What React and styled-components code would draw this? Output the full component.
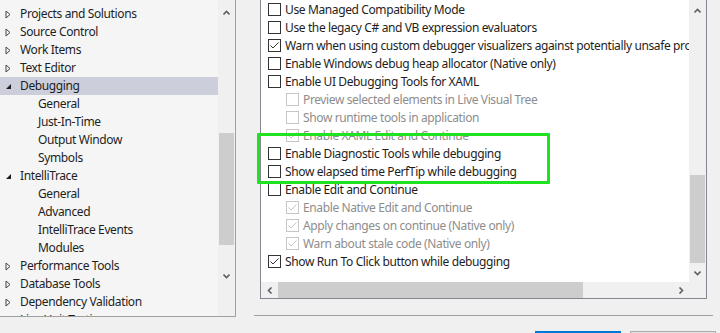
import React from 'react';
import styled, { createGlobalStyle } from 'styled-components';

const GlobalStyle = createGlobalStyle`
  html, body {
    margin: 0;
    padding: 0;
    background: #f0f0f0;
  }
  body {
    font-family: "Noto Sans", "Open Sans", sans-serif;
    font-size: 12px;
    letter-spacing: -0.38px;
    color: #1e1e1e;
  }
`;

const Frame = styled.div`
  width: 720px;
  height: 333px;
  overflow: hidden;
  display: flex;
  align-items: flex-start;
  background: #f0f0f0;
`;

/* left: options tree */

const TreePanel = styled.div`
  width: 235px;
  height: 316px;
  margin: -1px 0 0 -1px;
  border: 1px solid #a0a0a0;
  background: #f5f5f5;
  display: flex;
  overflow: hidden;
  flex-shrink: 0;
`;

const TreeList = styled.div`
  flex: 1;
  padding-top: 5px;
  overflow: hidden;
`;

const TreeRow = styled.div`
  height: 18px;
  display: flex;
  align-items: center;
  padding-left: ${p => (p.$depth ? 38 : 4)}px;
  background: ${p => (p.$selected ? '#cccedb' : 'transparent')};
  white-space: nowrap;
  line-height: 18px;
`;

const Expander = styled.span`
  width: 15px;
  height: 18px;
  display: flex;
  align-items: center;
  justify-content: flex-start;
  padding-left: 1px;
`;

const VScroll = styled.div`
  width: 17px;
  background: #f0f0f0;
  display: flex;
  flex-direction: column;
  align-items: center;
  flex-shrink: 0;
`;

const ArrowBox = styled.div`
  height: ${p => p.$h || 17}px;
  width: ${p => (p.$w ? `${p.$w}px` : '100%')};
  display: flex;
  align-items: center;
  justify-content: center;
  flex-shrink: 0;
`;

const Thumb = styled.div`
  width: 15px;
  background: #cdcdcd;
  margin-top: ${p => p.$top}px;
  height: ${p => p.$size}px;
  flex-shrink: 0;
`;

/* right: debugging options */

const RightColumn = styled.div`
  width: 459px;
  margin-left: 18px;
  display: flex;
  flex-direction: column;
`;

const PanelWrap = styled.div`
  position: relative;
  margin-left: 6px;
`;

const Panel = styled.div`
  width: 445px;
  height: 298px;
  margin-top: -1px;
  border: 1px solid #828790;
  display: grid;
  grid-template-columns: 428px 17px;
  grid-template-rows: 282px 16px;
  background: #f0f0f0;
`;

const Content = styled.div`
  background: #ffffff;
  overflow: hidden;
`;

const OptionRow = styled.div`
  height: 18px;
  display: flex;
  align-items: center;
  gap: 4px;
  padding-left: ${p => (p.$indent ? 25 : 7)}px;
  white-space: nowrap;
  color: ${p => (p.$disabled ? '#8d8d8d' : '#1e1e1e')};
`;

const Box = styled.span`
  width: 11px;
  height: 11px;
  border: 1px solid ${p => (p.$disabled ? '#c6c6c6' : '#333333')};
  background: #ffffff;
  flex-shrink: 0;
  display: flex;
  align-items: center;
  justify-content: center;
`;

const PanelVScroll = styled.div`
  display: flex;
  flex-direction: column;
  align-items: center;
  background: #f0f0f0;
`;

const HScroll = styled.div`
  display: flex;
  align-items: center;
  background: #f0f0f0;
`;

const HThumb = styled.div`
  height: 16px;
  width: ${p => p.$size}px;
  background: #cdcdcd;
  flex-shrink: 0;
`;

const Spacer = styled.div`
  flex: 1;
`;

const Corner = styled.div`
  background: #f0f0f0;
`;

const Highlight = styled.div`
  position: absolute;
  left: -3px;
  top: 133px;
  width: 287px;
  height: 45px;
  border: 3px solid #1ee31e;
  border-radius: 1px;
  pointer-events: none;
`;

const Separator = styled.div`
  height: 1px;
  background: #a0a0a0;
  margin-top: 16px;
`;

const ButtonRow = styled.div`
  display: flex;
  gap: 9px;
  margin: 15px 0 0 281px;
`;

const Button = styled.div`
  width: 84px;
  height: 21px;
  border: 1px solid ${p => (p.$primary ? '#0078d7' : '#adadad')};
  background: ${p => (p.$primary ? '#0078d7' : '#e1e1e1')};
  flex-shrink: 0;
`;

const Chevron = ({ dir }) => {
  const paths = {
    up: 'M0.5 4.5 L3.5 1.5 L6.5 4.5',
    down: 'M0.5 1.5 L3.5 4.5 L6.5 1.5',
  };
  if (dir === 'left' || dir === 'right') {
    const d = dir === 'left' ? 'M4.5 0.5 L1.5 3.5 L4.5 6.5' : 'M1.5 0.5 L4.5 3.5 L1.5 6.5';
    return (
      <svg width="6" height="7" viewBox="0 0 6 7">
        <path d={d} fill="none" stroke="#606060" strokeWidth="1.6" />
      </svg>
    );
  }
  return (
    <svg width="7" height="6" viewBox="0 0 7 6">
      <path d={paths[dir]} fill="none" stroke="#606060" strokeWidth="1.6" />
    </svg>
  );
};

const Triangle = ({ open }) =>
  open ? (
    <svg width="7" height="7" viewBox="0 0 7 7">
      <path d="M6 1 L6 6 L1 6 Z" fill="#1e1e1e" />
    </svg>
  ) : (
    <svg width="6" height="9" viewBox="0 0 6 9">
      <path d="M1 1 L5 4.5 L1 8 Z" fill="none" stroke="#444444" strokeWidth="1" />
    </svg>
  );

const Check = ({ disabled }) => (
  <svg width="11" height="11" viewBox="0 0 11 11">
    <path
      d="M1.5 5.5 L4 8 L9.5 2.5"
      fill="none"
      stroke={disabled ? '#c6c6c6' : '#333333'}
      strokeWidth="1"
    />
  </svg>
);

const treeItems = [
  { label: 'Projects and Solutions', kind: 'closed' },
  { label: 'Source Control', kind: 'closed' },
  { label: 'Work Items', kind: 'closed' },
  { label: 'Text Editor', kind: 'closed' },
  { label: 'Debugging', kind: 'open', selected: true },
  { label: 'General', child: true },
  { label: 'Just-In-Time', child: true },
  { label: 'Output Window', child: true },
  { label: 'Symbols', child: true },
  { label: 'IntelliTrace', kind: 'open' },
  { label: 'General', child: true },
  { label: 'Advanced', child: true },
  { label: 'IntelliTrace Events', child: true },
  { label: 'Modules', child: true },
  { label: 'Performance Tools', kind: 'closed' },
  { label: 'Database Tools', kind: 'closed' },
  { label: 'Dependency Validation', kind: 'closed' },
  { label: 'Live Unit Testing', kind: 'closed' },
];

const options = [
  { label: 'Use Managed Compatibility Mode' },
  { label: 'Use the legacy C# and VB expression evaluators' },
  { label: 'Warn when using custom debugger visualizers against potentially unsafe processes (Managed only)', checked: true },
  { label: 'Enable Windows debug heap allocator (Native only)' },
  { label: 'Enable UI Debugging Tools for XAML' },
  { label: 'Preview selected elements in Live Visual Tree', indent: true, disabled: true },
  { label: 'Show runtime tools in application', indent: true, disabled: true },
  { label: 'Enable XAML Edit and Continue', indent: true, disabled: true, checked: true },
  { label: 'Enable Diagnostic Tools while debugging' },
  { label: 'Show elapsed time PerfTip while debugging' },
  { label: 'Enable Edit and Continue' },
  { label: 'Enable Native Edit and Continue', indent: true, disabled: true, checked: true },
  { label: 'Apply changes on continue (Native only)', indent: true, disabled: true, checked: true },
  { label: 'Warn about stale code (Native only)', indent: true, disabled: true, checked: true },
  { label: 'Show Run To Click button while debugging', checked: true },
];

const App = () => (
  <>
    <GlobalStyle />
    <Frame>
      <TreePanel>
        <TreeList>
          {treeItems.map((item, i) => (
            <TreeRow key={i} $depth={item.child ? 1 : 0} $selected={item.selected}>
              {!item.child && (
                <Expander>
                  <Triangle open={item.kind === 'open'} />
                </Expander>
              )}
              {item.label}
            </TreeRow>
          ))}
        </TreeList>
        <VScroll>
          <ArrowBox $h={25}>
            <Chevron dir="up" />
          </ArrowBox>
          <Thumb $top={108} $size={112} />
          <ArrowBox $h={62}>
            <Chevron dir="down" />
          </ArrowBox>
        </VScroll>
      </TreePanel>

      <RightColumn>
        <PanelWrap>
          <Panel>
            <Content>
              {options.map((o, i) => (
                <OptionRow key={i} $indent={o.indent} $disabled={o.disabled}>
                  <Box $disabled={o.disabled}>{o.checked && <Check disabled={o.disabled} />}</Box>
                  {o.label}
                </OptionRow>
              ))}
            </Content>
            <PanelVScroll>
              <ArrowBox $h={22}>
                <Chevron dir="up" />
              </ArrowBox>
              <Thumb $top={153} $size={88} />
              <ArrowBox $h={19}>
                <Chevron dir="down" />
              </ArrowBox>
            </PanelVScroll>
            <HScroll>
              <ArrowBox $h={16} $w={17}>
                <Chevron dir="left" />
              </ArrowBox>
              <HThumb $size={305} />
              <Spacer />
              <ArrowBox $h={16} $w={17}>
                <Chevron dir="right" />
              </ArrowBox>
            </HScroll>
            <Corner />
          </Panel>
          <Highlight />
        </PanelWrap>
        <Separator />
        <ButtonRow>
          <Button $primary />
          <Button />
        </ButtonRow>
      </RightColumn>
    </Frame>
  </>
);

export default App;
